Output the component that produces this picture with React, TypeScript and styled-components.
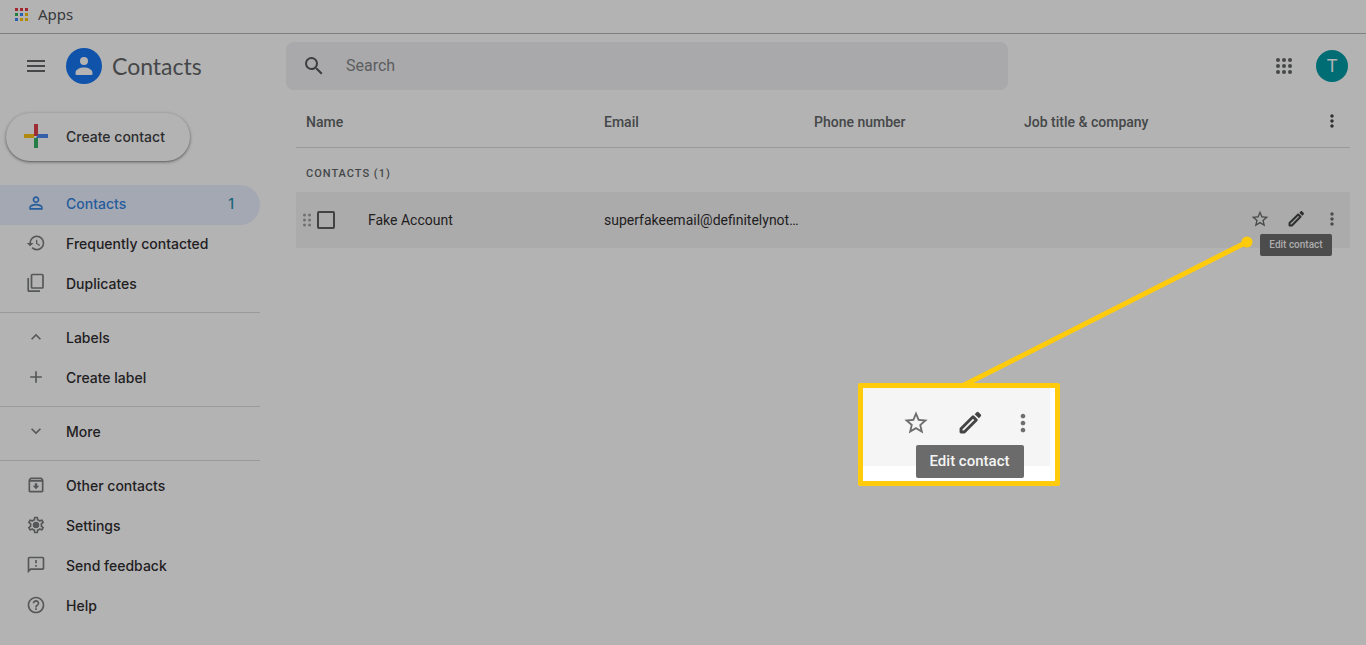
import React from "react";
import styled, { createGlobalStyle } from "styled-components";
import {
  MdAdd,
  MdExpandLess,
  MdExpandMore,
  MdHelpOutline,
  MdHistory,
  MdMenu,
  MdMoreVert,
  MdOutlineArchive,
  MdOutlineFeedback,
  MdOutlineSettings,
  MdPersonOutline,
  MdSearch,
  MdStarBorder,
} from "react-icons/md";

const color = {
  page: "#b3b3b3",
  raised: "#b3b3b3",
  field: "#a9a9ab",
  hover: "#ababab",
  rule: "#9a9a9b",
  text: "#1f2022",
  muted: "#454749",
  icon: "#565758",
  accent: "#255c9c",
  selected: "#a3a8b3",
  callout: "#ffcb0a",
};

const GlobalStyle = createGlobalStyle`
  * { box-sizing: border-box; }
  body {
    margin: 0;
    background: ${color.page};
    color: ${color.text};
    font-family: Roboto, "Liberation Sans", sans-serif;
    font-size: 14px;
  }
  button { font: inherit; color: inherit; background: none; border: 0; padding: 0; cursor: pointer; }
  svg { display: block; flex: none; }
`;

const Page = styled.div`
  position: relative;
  min-height: 100vh;
  overflow: hidden;
`;

const BookmarksBar = styled.nav`
  height: 34px;
  padding: 0 14px 5px;
  display: flex;
  align-items: center;
  border-bottom: 1px solid #808080;
`;

const Bookmark = styled.a`
  display: flex;
  align-items: center;
  gap: 10px;
  color: #38393b;
  text-decoration: none;
  font-family: "Noto Sans", sans-serif;
  font-size: 15px;
  line-height: 18px;
`;

const TopBar = styled.header`
  height: 64px;
  display: flex;
  align-items: center;
  padding-right: 18px;
`;

const Brand = styled.div`
  flex: 0 0 286px;
  display: flex;
  align-items: center;
  padding-left: 24px;
`;

const BrandName = styled.h1`
  margin: 0 0 0 10px;
  color: ${color.muted};
  font-family: Lato, sans-serif;
  font-size: 23px;
  line-height: 28px;
  font-weight: 400;
`;

const RoundButton = styled.button<{ $size: number; $tone?: string }>`
  width: ${(p) => p.$size}px;
  height: ${(p) => p.$size}px;
  display: inline-flex;
  align-items: center;
  justify-content: center;
  color: ${(p) => p.$tone ?? color.muted};
`;

const MenuButton = styled(RoundButton)`
  margin-right: 18px;
`;

const SearchForm = styled.form`
  flex: 0 1 722px;
  height: 48px;
  display: flex;
  align-items: center;
  gap: 20px;
  padding: 0 16px;
  border-radius: 8px;
  background: ${color.field};
  color: #3c3d3f;
`;

const SearchInput = styled.input`
  flex: 1;
  min-width: 0;
  border: 0;
  padding: 0;
  outline: 0;
  background: none;
  color: ${color.text};
  font-family: Roboto, sans-serif;
  font-size: 16px;
  line-height: 24px;
  &::placeholder { color: #5c5d5f; opacity: 1; }
`;

const Account = styled.div`
  margin-left: auto;
  display: flex;
  align-items: center;
  gap: 12px;
`;

const Avatar = styled.button`
  && {
    width: 32px;
    height: 32px;
    border-radius: 50%;
    background: #006d75;
    color: #b3b3b3;
    font-size: 18px;
    line-height: 32px;
  }
`;

const Body = styled.div`
  display: flex;
  align-items: flex-start;
`;

const Sidebar = styled.aside`
  flex: 0 0 260px;
  padding-top: 15px;
`;

const CreateButton = styled.button`
  && {
    width: 184px;
    height: 48px;
    margin: 0 0 24px 6px;
    padding: 0 0 2px 12px;
    display: flex;
    align-items: center;
    gap: 12px;
    border-radius: 24px;
    background: ${color.raised};
    box-shadow: 0 1px 2px rgba(30, 32, 34, 0.42), 0 1px 3px 1px rgba(30, 32, 34, 0.18);
    font-family: Inter, sans-serif;
    font-size: 14px;
    font-weight: 500;
    color: #2b2c2e;
  }
`;

const NavGroup = styled.ul`
  list-style: none;
  margin: 0;
  padding: 0;
  & + & {
    margin-top: 7px;
    padding-top: 6px;
    border-top: 1px solid ${color.rule};
  }
`;

const NavLink = styled.a<{ $selected?: boolean }>`
  height: 40px;
  padding: 0 26px 4px;
  display: flex;
  align-items: center;
  gap: 20px;
  border-radius: 0 20px 20px 0;
  text-decoration: none;
  font-family: Inter, sans-serif;
  font-size: 14px;
  font-weight: 500;
  background: ${(p) => (p.$selected ? color.selected : "none")};
  color: ${(p) => (p.$selected ? color.accent : color.text)};
  svg { color: ${(p) => (p.$selected ? color.accent : color.icon)}; }
`;

const Count = styled.span`
  margin-left: auto;
  color: #1c6478;
`;

const Main = styled.main`
  flex: 1;
  min-width: 0;
  padding: 0 16px 0 36px;
`;

const ContactTable = styled.table`
  width: 100%;
  table-layout: fixed;
  border-collapse: separate;
  border-spacing: 0;
`;

const Col = styled.col<{ $width?: number }>`
  width: ${(p) => (p.$width ? p.$width + "px" : "auto")};
`;

const HeadCell = styled.th`
  height: 50px;
  padding: 0 0 2px 10px;
  border-bottom: 1px solid ${color.rule};
  text-align: left;
  font-weight: 500;
  color: ${color.muted};
`;

const GroupCell = styled.th`
  height: 44px;
  padding: 6px 0 0 10px;
  text-align: left;
  font-size: 11px;
  font-weight: 500;
  letter-spacing: 1px;
  color: ${color.muted};
`;

const Cell = styled.td`
  height: 56px;
  padding: 0 0 0 10px;
  background: ${color.hover};
  white-space: nowrap;
`;

const NameCell = styled.div`
  display: flex;
  align-items: center;
  margin-left: -3px;
`;

const Checkbox = styled.input`
  appearance: none;
  width: 18px;
  height: 18px;
  margin: 0 33px 0 6px;
  border: 2px solid #414244;
  border-radius: 2px;
`;

const Actions = styled.div`
  display: flex;
  justify-content: flex-end;
  padding-bottom: 2px;
`;

const TooltipAnchor = styled.span`
  position: relative;
  display: flex;
`;

const Tooltip = styled.span<{ $large?: boolean }>`
  position: absolute;
  top: ${(p) => (p.$large ? 49 : 33)}px;
  left: 50%;
  transform: translateX(-50%);
  width: ${(p) => (p.$large ? 108 : 72)}px;
  line-height: ${(p) => (p.$large ? 33 : 22)}px;
  font-size: ${(p) => (p.$large ? 15 : 10)}px;
  font-weight: 500;
  text-align: center;
  white-space: nowrap;
  border-radius: 2px;
  background: ${(p) => (p.$large ? "#6b6b6b" : "#4c4c4c")};
  color: ${(p) => (p.$large ? "#f4f4f4" : "#acacac")};
`;

const Annotation = styled.aside`
  position: absolute;
  top: 236px;
  right: 112px;
  width: 396px;
`;

const Magnified = styled.div`
  width: 202px;
  height: 103px;
  border: 5px solid ${color.callout};
  border-radius: 2px;
  background: #ffffff;
`;

const MagnifiedRow = styled.div`
  width: 187px;
  height: 78px;
  padding: 8px 0 0 26px;
  display: flex;
  background: #f5f5f5;
`;

const AppsBookmarkIcon = () => {
  const fills = ["#a3262f", "#a3262f", "#a3262f", "#23803f", "#2a5fb0", "#b08a06", "#2a5fb0", "#b08a06", "#b08a06"];
  return (
    <svg width="14" height="14" viewBox="0 0 14 14">
      {fills.map((fill, i) => (
        <rect key={i} x={1 + (i % 3) * 5} y={Math.floor(i / 3) * 5 + 1} width="3" height="3" fill={fill} />
      ))}
    </svg>
  );
};

const LogoIcon = () => (
  <svg width="36" height="36" viewBox="0 0 36 36">
    <circle cx="18" cy="18" r="18" fill="#1053ab" />
    <circle cx="18" cy="13" r="4" fill="#b3b3b3" />
    <path d="M9.500 25c0-3.800 4.200-5.600 8.500-5.600s8.500 1.800 8.500 5.600v.8a1.200 1.200 0 0 1-1.200 1.200H10.700a1.200 1.200 0 0 1-1.200-1.200z" fill="#b3b3b3" />
  </svg>
);

const AppsGridIcon = () => (
  <svg width="24" height="24" viewBox="0 0 24 24" fill="currentColor">
    {[6, 12, 18].map((y) => [6, 12, 18].map((x) => <circle key={x + "-" + y} cx={x} cy={y} r="2" />))}
  </svg>
);

const PlusIcon = () => (
  <svg width="36" height="36" viewBox="0 0 36 36">
    <path fill="#9d2c34" d="M16 6h4v12h-4z" />
    <path fill="#b08a10" d="M6 16h10v4H6z" />
    <path fill="#3360a8" d="M20 16h10v4H18z" />
    <path fill="#257d48" d="M16 20h4v10h-4z" />
  </svg>
);

const DuplicateIcon = () => (
  <svg width="20" height="20" viewBox="0 0 20 20" fill="none" stroke="currentColor" strokeWidth="1.7">
    <rect x="5.500" y="1.500" width="11.500" height="13.500" rx="1" />
    <path d="M2.200 5v12.200a1 1 0 0 0 1 1H14" />
  </svg>
);

const SettingsIcon = () => (
  <svg width="20" height="20" viewBox="0 0 20 20" fill="currentColor">
    <MdOutlineSettings size={20} />
    <circle cx="10" cy="10" r="3" />
  </svg>
);

const DragIcon = () => (
  <svg width="8" height="14" viewBox="0 0 8 14" fill="#707172">
    {[2, 7, 12].map((y) => [1.5, 6.5].map((x) => <circle key={x + "-" + y} cx={x} cy={y} r="1.500" />))}
  </svg>
);

const PencilIcon = ({ size }: { size: number }) => (
  <svg width={size} height={size} viewBox="0 0 24 24">
    <path
      fill="none"
      stroke="currentColor"
      strokeWidth="2.500"
      strokeLinejoin="round"
      d="M14.600 6.600 4.300 16.900V19.700H7.100L17.400 9.400z"
    />
    <path fill="currentColor" d="m16 4.400 1.500-1.500c.6-.6 1.400-.6 2 0l1.600 1.600c.6.6.6 1.400 0 2L19.600 8z" />
  </svg>
);

const RowActions = ({ large }: { large?: boolean }) => {
  const icon = large ? 28 : 20;
  const box = large ? 54 : 36;
  const tone = large ? "#6e6e6e" : "#4a4b4c";
  return (
    <>
      <RoundButton type="button" aria-label="Star contact" $size={box} $tone={tone}>
        <MdStarBorder size={icon} />
      </RoundButton>
      <TooltipAnchor>
        <RoundButton type="button" aria-label="Edit contact" $size={box} $tone={large ? "#444444" : "#2e2f30"}>
          <PencilIcon size={icon} />
        </RoundButton>
        <Tooltip $large={large}>Edit contact</Tooltip>
      </TooltipAnchor>
      <RoundButton type="button" aria-label="More actions" $size={box} $tone={tone}>
        <MdMoreVert size={icon} />
      </RoundButton>
    </>
  );
};

const navGroups = [
  [
    { label: "Contacts", icon: MdPersonOutline, count: 1 },
    { label: "Frequently contacted", icon: MdHistory },
    { label: "Duplicates", icon: DuplicateIcon },
  ],
  [
    { label: "Labels", icon: MdExpandLess },
    { label: "Create label", icon: MdAdd },
  ],
  [{ label: "More", icon: MdExpandMore }],
  [
    { label: "Other contacts", icon: MdOutlineArchive },
    { label: "Settings", icon: SettingsIcon },
    { label: "Send feedback", icon: MdOutlineFeedback },
    { label: "Help", icon: MdHelpOutline },
  ],
] as { label: string; icon: React.ComponentType<{ size?: number }>; count?: number }[][];

export default function App() {
  return (
    <Page>
      <GlobalStyle />
      <BookmarksBar>
        <Bookmark href="#apps">
          <AppsBookmarkIcon />
          Apps
        </Bookmark>
      </BookmarksBar>
      <TopBar>
        <Brand>
          <MenuButton type="button" aria-label="Main menu" $size={24}>
            <MdMenu size={24} />
          </MenuButton>
          <LogoIcon />
          <BrandName>Contacts</BrandName>
        </Brand>
        <SearchForm role="search">
          <MdSearch size={24} />
          <SearchInput type="text" placeholder="Search" aria-label="Search" />
        </SearchForm>
        <Account>
          <RoundButton type="button" aria-label="Google apps" $size={40}>
            <AppsGridIcon />
          </RoundButton>
          <Avatar type="button" aria-label="Account">T</Avatar>
        </Account>
      </TopBar>
      <Body>
        <Sidebar>
          <CreateButton type="button">
            <PlusIcon />
            Create contact
          </CreateButton>
          {navGroups.map((group, i) => (
            <NavGroup key={i}>
              {group.map(({ label, icon: Icon, count }) => (
                <li key={label}>
                  <NavLink href="#nav" $selected={count !== undefined}>
                    <Icon size={20} />
                    {label}
                    {count !== undefined && <Count>{count}</Count>}
                  </NavLink>
                </li>
              ))}
            </NavGroup>
          ))}
        </Sidebar>
        <Main>
          <ContactTable>
            <colgroup>
              <Col $width={298} />
              <Col $width={210} />
              <Col $width={210} />
              <Col />
              <Col $width={118} />
            </colgroup>
            <thead>
              <tr>
                <HeadCell scope="col">Name</HeadCell>
                <HeadCell scope="col">Email</HeadCell>
                <HeadCell scope="col">Phone number</HeadCell>
                <HeadCell scope="col">Job title &amp; company</HeadCell>
                <HeadCell scope="col">
                  <Actions>
                    <RoundButton type="button" aria-label="List settings" $size={36} $tone="#2e2f30">
                      <MdMoreVert size={20} />
                    </RoundButton>
                  </Actions>
                </HeadCell>
              </tr>
            </thead>
            <tbody>
              <tr>
                <GroupCell scope="rowgroup" colSpan={5}>CONTACTS (1)</GroupCell>
              </tr>
              <tr>
                <Cell>
                  <NameCell>
                    <DragIcon />
                    <Checkbox type="checkbox" id="contact-1" />
                    <label htmlFor="contact-1">Fake Account</label>
                  </NameCell>
                </Cell>
                <Cell>superfakeemail@definitelynot…</Cell>
                <Cell />
                <Cell />
                <Cell>
                  <Actions>
                    <RowActions />
                  </Actions>
                </Cell>
              </tr>
            </tbody>
          </ContactTable>
        </Main>
      </Body>
      <Annotation>
        <svg width="396" height="147" viewBox="0 0 396 147">
          <path d="M104 150 389 6" stroke={color.callout} strokeWidth="5" />
          <circle cx="389" cy="6" r="5.500" fill={color.callout} />
        </svg>
        <Magnified>
          <MagnifiedRow>
            <RowActions large />
          </MagnifiedRow>
        </Magnified>
      </Annotation>
    </Page>
  );
}
